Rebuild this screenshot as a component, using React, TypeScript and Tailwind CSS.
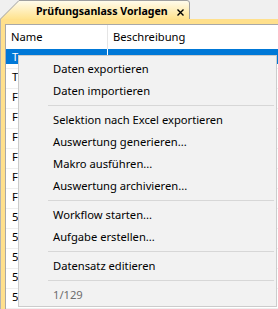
import React from "react";

const rows = ["T", "T", "F", "F", "F", "F", "F", "F", "5", "5", "5", "5", "5"];

type MenuEntry = { label: string; disabled?: boolean } | "sep";

const menu: MenuEntry[] = [
  { label: "Daten exportieren" },
  { label: "Daten importieren" },
  "sep",
  { label: "Selektion nach Excel exportieren" },
  { label: "Auswertung generieren..." },
  { label: "Makro ausführen..." },
  { label: "Auswertung archivieren..." },
  "sep",
  { label: "Workflow starten..." },
  { label: "Aufgabe erstellen..." },
  "sep",
  { label: "Datensatz editieren" },
  "sep",
  { label: "1/129", disabled: true },
];

function Tab() {
  return (
    <div className="h-[20px] flex items-end">
      <div className="relative w-[191px] h-[19px] flex items-center pt-[3px]">
        <svg className="absolute inset-0" width="191" height="19" viewBox="0 0 191 19">
          <defs>
            <linearGradient id="tabfill" x1="0" y1="0" x2="0" y2="1">
              <stop offset="0" stopColor="#fffcee" />
              <stop offset="1" stopColor="#ffe28c" />
            </linearGradient>
          </defs>
          <path
            d="M0 19.5 L19 0.5 L187 0.5 Q189.5 0.5 189.5 3 L189.5 19.5"
            fill="url(#tabfill)"
            stroke="#a0a0a0"
            strokeWidth="1"
          />
        </svg>
        <span className="relative ml-[36px] font-bold text-[10.6px] leading-none whitespace-nowrap">
          Prüfungsanlass Vorlagen
        </span>
        <svg className="relative ml-auto mr-[7px] mt-[2px] shrink-0" width="7" height="7" viewBox="0 0 7 7">
          <path d="M0.5 0.5 L6.5 6.5 M6.5 0.5 L0.5 6.5" stroke="#000" strokeWidth="1.4" />
        </svg>
      </div>
    </div>
  );
}

function ContextMenu() {
  return (
    <div className="absolute left-[18px] top-[55px] w-[259px] h-[252px] bg-[#f2f2f2] border border-[#cccccc] pt-[2px] flex flex-col">
      {menu.map((m, i) =>
        m === "sep" ? (
          <div key={i} className="h-[7px] flex items-center pl-[29px] pr-[2px]">
            <div className="h-px w-full bg-[#d7d7d7]" />
          </div>
        ) : (
          <div
            key={i}
            className={`h-[22px] leading-[22px] pl-[34px] text-[11.2px] whitespace-nowrap ${m.disabled ? "text-[#6d6d6d]" : "text-black"}`}
          >
            {m.label}
          </div>
        )
      )}
    </div>
  );
}

export default function App() {
  return (
    <div className="relative w-[278px] h-[309px] overflow-hidden bg-[#f0f0f0] flex flex-col text-black font-['Noto_Sans',sans-serif]">
      <Tab />
      <div className="flex-1 flex bg-[#ffe08c] border-l border-[#b4b4b4] pl-[4px] pt-[5px]">
        <div className="flex-1 flex flex-col bg-white border-l border-t border-[#a8a8a8] overflow-hidden">
          <div className="h-[24px] flex items-center text-[11.2px] shrink-0">
            <div className="w-[102px] h-full flex items-center pl-[5px] border-r border-[#e5e5e5]">Name</div>
            <div className="pl-[5px]">Beschreibung</div>
          </div>
          <div className="flex-1 overflow-hidden">
            {rows.map((r, i) => (
              <div key={i} className="h-[20px] border-b border-[#efefef] text-[11.2px]">
                {i === 0 ? (
                  <div className="h-[15px] flex">
                    <div className="w-[101px] bg-[#0078d7] text-white pl-[6px] leading-[15px]">{r}</div>
                    <div className="w-px bg-white" />
                    <div className="flex-1 bg-[#0078d7]" />
                  </div>
                ) : (
                  <div className="h-[15px] pl-[6px] leading-[15px]">{r}</div>
                )}
              </div>
            ))}
          </div>
          <div className="h-[4px] shrink-0 bg-[#f0f0f0]" />
        </div>
      </div>
      <ContextMenu />
    </div>
  );
}
